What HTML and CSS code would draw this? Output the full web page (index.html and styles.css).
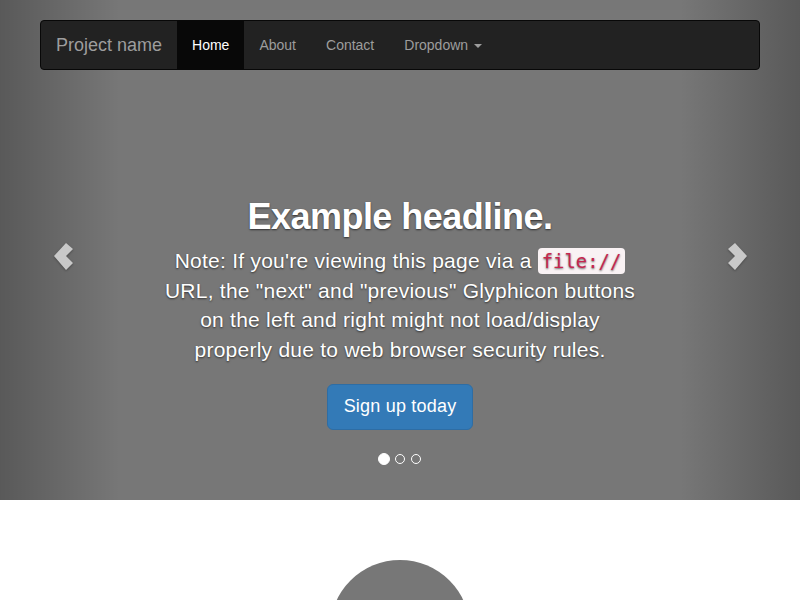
FILE: index.html
```html
<!DOCTYPE html>
<html lang="en">
<head>
<meta charset="utf-8">
<title>Carousel Template</title>
<link rel="stylesheet" href="styles.css">
</head>
<body>
<div class="carousel">
  <nav class="navbar">
    <a class="brand" href="#">Project name</a>
    <ul class="nav">
      <li class="active"><a href="#">Home</a></li>
      <li><a href="#">About</a></li>
      <li><a href="#">Contact</a></li>
      <li><a href="#">Dropdown <span class="caret"></span></a></li>
    </ul>
  </nav>

  <a class="control left" href="#">
    <svg class="chev" width="22" height="30" viewBox="0 0 22 30"><polygon points="1,14 13,1 20,7 13,14 20,21 13,28" fill="#c9c9c9"/></svg>
  </a>
  <a class="control right" href="#">
    <svg class="chev" width="22" height="30" viewBox="0 0 22 30"><polygon points="21,14 9,1 2,7 9,14 2,21 9,28" fill="#c9c9c9"/></svg>
  </a>

  <div class="caption">
    <h1>Example headline.</h1>
    <p>Note: If you're viewing this page via a <code>file://</code> URL, the "next" and "previous" Glyphicon buttons on the left and right might not load/display properly due to web browser security rules.</p>
    <a class="btn" href="#">Sign up today</a>
  </div>

  <ol class="indicators">
    <li class="on"></li>
    <li></li>
    <li></li>
  </ol>
</div>

<div class="marketing">
  <div class="col">
    <div class="thumb"></div>
  </div>
</div>
</body>
</html>
```

FILE: styles.css
```css
* { box-sizing: border-box; }
body {
  margin: 0;
  font-family: "Liberation Sans", Arial, sans-serif;
  font-size: 14px;
  line-height: 1.42857;
  color: #333;
  background: #fff;
}
a { text-decoration: none; }

.carousel {
  position: relative;
  height: 500px;
  background: #777;
  margin-bottom: 60px;
  display: flex;
  justify-content: center;
  align-items: flex-end;
}

.navbar {
  position: absolute;
  top: 20px;
  left: 40px;
  right: 40px;
  height: 50px;
  background: #222;
  border: 1px solid #080808;
  border-radius: 4px;
  display: flex;
  align-items: stretch;
  z-index: 20;
  overflow: hidden;
}
.brand {
  font-size: 18px;
  line-height: 20px;
  padding: 14px 15px 15px;
  color: #9d9d9d;
}
.nav {
  list-style: none;
  margin: 0;
  padding: 0;
  display: flex;
}
.nav li a {
  display: block;
  padding: 14px 15px 15px;
  line-height: 20px;
  color: #9d9d9d;
  height: 100%;
}
.nav li.active a {
  background: #080808;
  color: #fff;
}
.caret {
  display: inline-block;
  width: 0;
  height: 0;
  margin-left: 2px;
  vertical-align: middle;
  border-top: 4px solid #9d9d9d;
  border-left: 4px solid transparent;
  border-right: 4px solid transparent;
}

.control {
  position: absolute;
  top: 0;
  bottom: 0;
  width: 120px;
  display: flex;
  align-items: center;
  z-index: 5;
}
.control.left {
  left: 0;
  background: linear-gradient(to right, rgba(0,0,0,0.25), rgba(0,0,0,0));
  justify-content: flex-start;
  padding-left: 53px;
}
.control.right {
  right: 0;
  background: linear-gradient(to right, rgba(0,0,0,0), rgba(0,0,0,0.25));
  justify-content: flex-end;
  padding-right: 52px;
}
.chev {
  display: block;
  margin-top: 14px;
  filter: drop-shadow(0 1px 1px rgba(0,0,0,0.3));
}

.caption {
  width: 60%;
  padding: 20px 0 70px;
  text-align: center;
  color: #fff;
  text-shadow: 0 1px 2px rgba(0,0,0,0.6);
  z-index: 10;
}
.caption h1 {
  font-size: 36px;
  font-weight: bold;
  line-height: 1.1;
  letter-spacing: -0.55px;
  margin: 20px 0 10px;
}
.caption p {
  font-size: 21px;
  line-height: 1.4;
  letter-spacing: 0.25px;
  margin: 0 0 20px;
}
code {
  font-family: "DejaVu Sans Mono", monospace;
  font-size: 90%;
  letter-spacing: 0;
  padding: 2px 4px;
  color: #c7254e;
  background: #f9f2f4;
  border-radius: 4px;
}
.btn {
  display: inline-block;
  padding: 10px 16px;
  font-size: 18px;
  line-height: 1.3333;
  letter-spacing: 0.2px;
  color: #fff;
  background: #337ab7;
  border: 1px solid #2e6da4;
  border-radius: 6px;
  text-shadow: none;
}

.indicators {
  position: absolute;
  bottom: 35px;
  left: 0;
  right: 0;
  height: 12px;
  margin: 0;
  padding: 0;
  list-style: none;
  display: flex;
  justify-content: center;
  align-items: center;
  gap: 4px;
  z-index: 15;
}
.indicators li {
  width: 10px;
  height: 10px;
  margin: 0 1px;
  border: 1px solid #fff;
  border-radius: 50%;
}
.indicators li.on {
  width: 12px;
  height: 12px;
  margin: 0;
  background: #fff;
}

.marketing {
  display: flex;
  justify-content: center;
  padding: 0 15px;
}
.col {
  text-align: center;
  margin-bottom: 20px;
}
.thumb {
  width: 140px;
  height: 140px;
  border-radius: 50%;
  background: #777;
  margin: 0 auto;
}
```
